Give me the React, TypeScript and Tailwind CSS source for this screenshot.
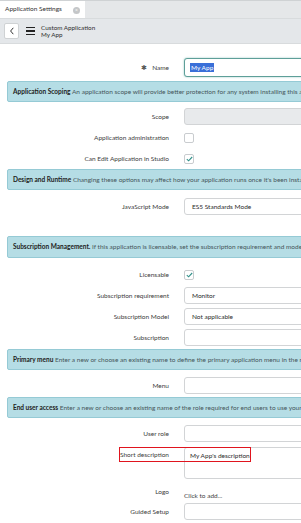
import React, { FC, ReactNode } from "react";

const font = { fontFamily: "Lato, 'Open Sans', sans-serif" };

interface RowProps {
  label: ReactNode;
  className?: string;
  children?: ReactNode;
}

const Row: FC<RowProps> = ({ label, className, children }) => (
  <div className={["flex flex-row items-center", className].join(" ")}>
    <div className="w-[169px] shrink-0 text-right text-[6.5px] text-[#3d3d3d] whitespace-nowrap">
      {label}
    </div>
    <div className="ml-[15px] flex-1">{children}</div>
  </div>
);

const Input: FC<{ value?: string; gray?: boolean }> = ({ value, gray }) => (
  <div
    className={[
      "w-[140px] h-[17px] rounded-[3px] border border-[#d2d4d6] pl-[7px] flex items-center text-[6.5px] text-[#2b2b2b] whitespace-nowrap",
      gray ? "bg-[#e8eaec]" : "bg-white",
    ].join(" ")}
  >
    {value}
  </div>
);

const Checkbox: FC<{ checked?: boolean }> = ({ checked }) => (
  <div className="w-[10px] h-[10px] rounded-[2px] border border-[#c9cccf] bg-white flex items-center justify-center">
    {checked && (
      <svg width="7" height="6" viewBox="0 0 7 6">
        <path d="M0.8 3.2 L2.6 4.8 L6.2 1" fill="none" stroke="#2f8f88" strokeWidth="1.1" />
      </svg>
    )}
  </div>
);

const Bar: FC<{ title: string; text: string; className?: string }> = ({
  title,
  text,
  className,
}) => (
  <div
    className={[
      "ml-[7px] w-[320px] h-[21px] flex items-center bg-[#b5dde5] border border-[#95cad5] rounded-[2px] pl-[5px] whitespace-nowrap overflow-hidden text-[6.5px] text-[#45565a]",
      className,
    ].join(" ")}
  >
    <span className="font-bold text-[#222]">{title}</span>
    &nbsp;{text}
  </div>
);

export default function App() {
  return (
    <div className="w-[301px] h-[523px] overflow-hidden bg-white" style={font}>
      {/* tab strip */}
      <div className="h-[18px] bg-[#e5e7e9] border-t border-[#cfd2d4] flex flex-row">
        <div className="w-[85px] bg-white flex items-center justify-between pl-[5px] pr-[5px] pb-[2px] text-[6.5px] text-[#333] whitespace-nowrap">
          <span>Application Settings</span>
          <span className="mt-[4px] w-[7px] h-[7px] rounded-full bg-[#c4c6c8] flex items-center justify-center text-[5px] leading-none text-white">
            ×
          </span>
        </div>
      </div>

      {/* header */}
      <div className="h-[26px] bg-[#e4e7ea] border-t border-[#d8dbdd] border-b border-[#d0d3d6] flex flex-row items-center pl-[4px]">
        <div className="w-[15px] h-[16px] bg-white border border-[#cfd2d4] rounded-[2px] flex items-center justify-center">
          <svg width="6" height="8" viewBox="0 0 6 8">
            <path d="M4.3 0.8 L1.6 4 L4.3 7.2" fill="none" stroke="#333" strokeWidth="1" />
          </svg>
        </div>
        <div className="ml-[7px] w-[9px] flex flex-col gap-[2px]">
          <div className="h-[1.5px] bg-[#222]" />
          <div className="h-[1.5px] bg-[#222]" />
          <div className="h-[1.5px] bg-[#222]" />
        </div>
        <div className="ml-[6px] flex flex-col leading-[7.5px] text-[6.3px] text-[#2f2f2f] whitespace-nowrap">
          <span>Custom Application</span>
          <span>My App</span>
        </div>
      </div>

      {/* name */}
      <Row
        className="mt-[14px] h-[19px]"
        label={
          <span>
            <span className="text-[#555] mr-[5px]">✱</span>Name
          </span>
        }
      >
        <div className="w-[140px] h-[19px] rounded-[3px] border border-[#5e9f99] shadow-[0_0_2px_#8cc3bd] bg-white pl-[5px] flex items-center text-[6.5px]">
          <span className="bg-[#3a6fd8] text-white px-[1px]">My App</span>
        </div>
      </Row>

      <Bar
        className="mt-[4px]"
        title="Application Scoping"
        text="An application scope will provide better protection for any system installing this application"
      />

      <Row className="mt-[4px] h-[21px]" label="Scope">
        <Input gray />
      </Row>
      <Row className="h-[21px]" label="Application administration">
        <Checkbox />
      </Row>
      <Row className="h-[21px]" label="Can Edit Application in Studio">
        <Checkbox checked />
      </Row>

      <Bar
        title="Design and Runtime"
        text="Changing these options may affect how your application runs once it's been installed"
      />

      <Row className="mt-[6px] h-[21px]" label="JavaScript Mode">
        <Input value="ES5 Standards Mode" />
      </Row>

      <Bar
        className="mt-[19px] h-[22px]"
        title="Subscription Management."
        text="If this application is licensable, set the subscription requirement and model."
      />

      <Row className="mt-[6px] h-[21px]" label="Licensable">
        <Checkbox checked />
      </Row>
      <Row className="h-[21px]" label="Subscription requirement">
        <Input value="Monitor" />
      </Row>
      <Row className="h-[21px]" label="Subscription Model">
        <Input value="Not applicable" />
      </Row>
      <Row className="h-[21px]" label="Subscription">
        <Input />
      </Row>

      <Bar
        className="mt-[1px]"
        title="Primary menu"
        text="Enter a new or choose an existing name to define the primary application menu in the navigator"
      />

      <Row className="mt-[5px] h-[21px]" label="Menu">
        <Input />
      </Row>

      <Bar
        className="mt-[1px]"
        title="End user access"
        text="Enter a new or choose an existing name of the role required for end users to use your application"
      />

      <Row className="mt-[5px] h-[21px]" label="User role">
        <Input />
      </Row>

      {/* short description, outlined in red */}
      <div className="relative mt-[3px] h-[32px] flex flex-row items-start">
        <div className="w-[169px] shrink-0 text-right text-[6.5px] text-[#3d3d3d] pt-[2px] leading-[11px] whitespace-nowrap">
          Short description
        </div>
        <div className="ml-[15px]">
          <div className="w-[140px] h-[32px] rounded-[3px] border border-[#d2d4d6] bg-white pl-[5px] pt-[2px] text-[6.5px] leading-[11px] text-[#2b2b2b] whitespace-nowrap">
            My App's description
          </div>
        </div>
        <div className="absolute left-[119px] top-0 w-[132px] h-[15px] border-[1.5px] border-[#e0141e]" />
      </div>

      <Row className="mt-[3px] h-[20px]" label="Logo">
        <span className="text-[6.5px] text-[#444]">Click to add...</span>
      </Row>
      <Row className="h-[19px]" label="Guided Setup">
        <Input />
      </Row>
    </div>
  );
}
